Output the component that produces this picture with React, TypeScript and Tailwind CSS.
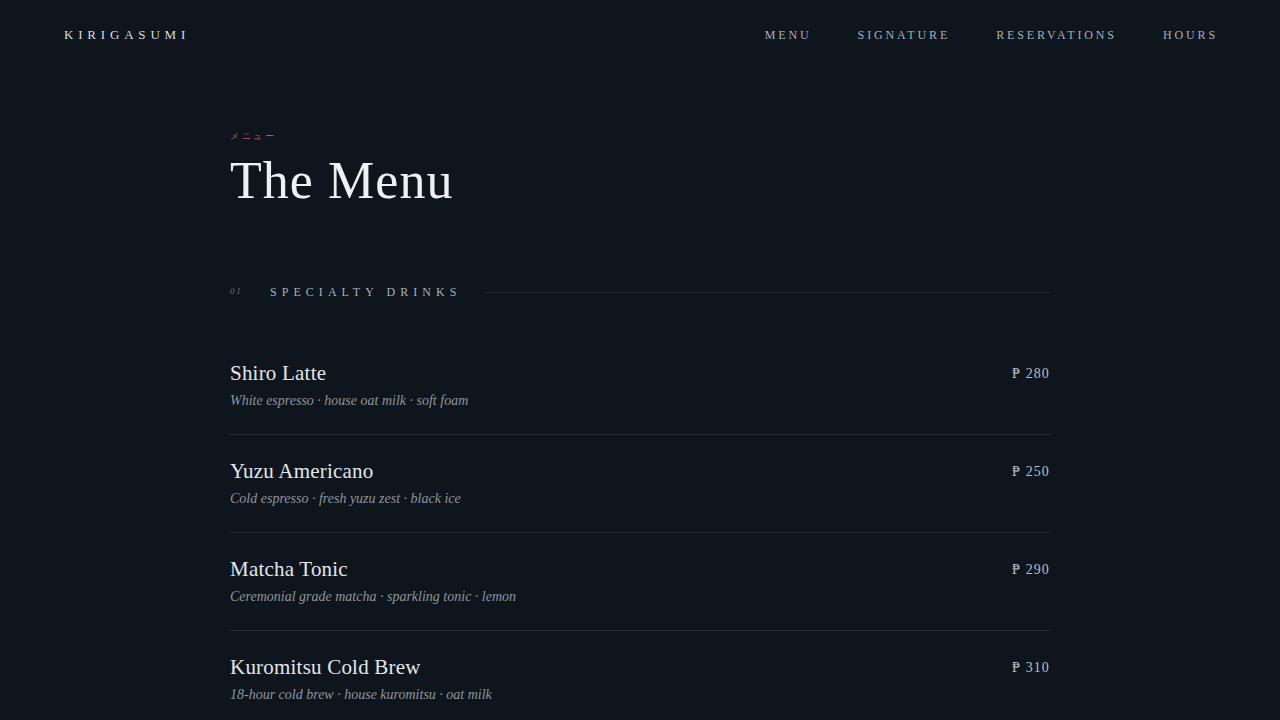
import type { ReactNode } from 'react'

const SERIF = { fontFamily: '"Liberation Serif", "DejaVu Serif", serif' }

const NAV = ['MENU', 'SIGNATURE', 'RESERVATIONS', 'HOURS']

const DRINKS = [
  { name: 'Shiro Latte', desc: 'White espresso · house oat milk · soft foam', price: '280' },
  { name: 'Yuzu Americano', desc: 'Cold espresso · fresh yuzu zest · black ice', price: '250' },
  { name: 'Matcha Tonic', desc: 'Ceremonial grade matcha · sparkling tonic · lemon', price: '290' },
  { name: 'Kuromitsu Cold Brew', desc: '18-hour cold brew · house kuromitsu · oat milk', price: '310' },
]

function Header() {
  return (
    <header className="flex h-[70px] items-center justify-between pl-16 pr-[62px]">
      <span className="text-[13px] tracking-[0.37em] text-[#d9dde2]">KIRIGASUMI</span>
      <nav className="flex items-center gap-[46px]">
        {NAV.map((n) => (
          <span key={n} className="text-[12px] tracking-[0.24em] text-[#a9b0b8]">
            {n}
          </span>
        ))}
      </nav>
    </header>
  )
}

function SectionTitle({ num, children }: { num: string; children: ReactNode }) {
  return (
    <div className="flex h-[18px] items-center">
      <span className="w-[40px] text-[9px] italic tracking-[0.2em] text-[#6c737b]">{num}</span>
      <span className="text-[12px] tracking-[0.42em] text-[#a9b0b8]">{children}</span>
      <div className="ml-[24px] h-px flex-1 bg-[#1f2730]" />
    </div>
  )
}

function Drink({ name, desc, price, last }: { name: string; desc: string; price: string; last?: boolean }) {
  return (
    <div className={`flex items-start justify-between pt-[22px] pb-[23px] ${last ? '' : 'border-b border-[#232b34]'}`}>
      <div className="flex flex-col">
        <span className="text-[21px] leading-[28px] tracking-[0.01em] text-[#e4e6e9]">{name}</span>
        <span className="mt-[4px] text-[14px] italic leading-[20px] text-[#8e959d]">{desc}</span>
      </div>
      <span className="pt-[4px] text-[14px] tracking-[0.08em] text-[#b9bec4]">₱ {price}</span>
    </div>
  )
}

export default function App() {
  return (
    <div className="h-[720px] w-[1280px] overflow-hidden bg-[#0e151d]" style={SERIF}>
      <Header />
      <main className="mx-auto w-[820px] pt-[58px]">
        <div className="mt-[2px] h-[13px] text-[9px] leading-[13px] tracking-[0.3em] text-[#b05a60]">メニュー</div>
        <h1 className="mt-[8px] text-[52px] font-normal leading-[60px] tracking-[0.02em] text-[#eef0f2]">The Menu</h1>
        <div className="mt-[72px]">
          <SectionTitle num="01">SPECIALTY DRINKS</SectionTitle>
        </div>
        <div className="mt-[36px]">
          {DRINKS.map((d, i) => (
            <Drink key={d.name} {...d} last={i === DRINKS.length - 1} />
          ))}
        </div>
      </main>
    </div>
  )
}
